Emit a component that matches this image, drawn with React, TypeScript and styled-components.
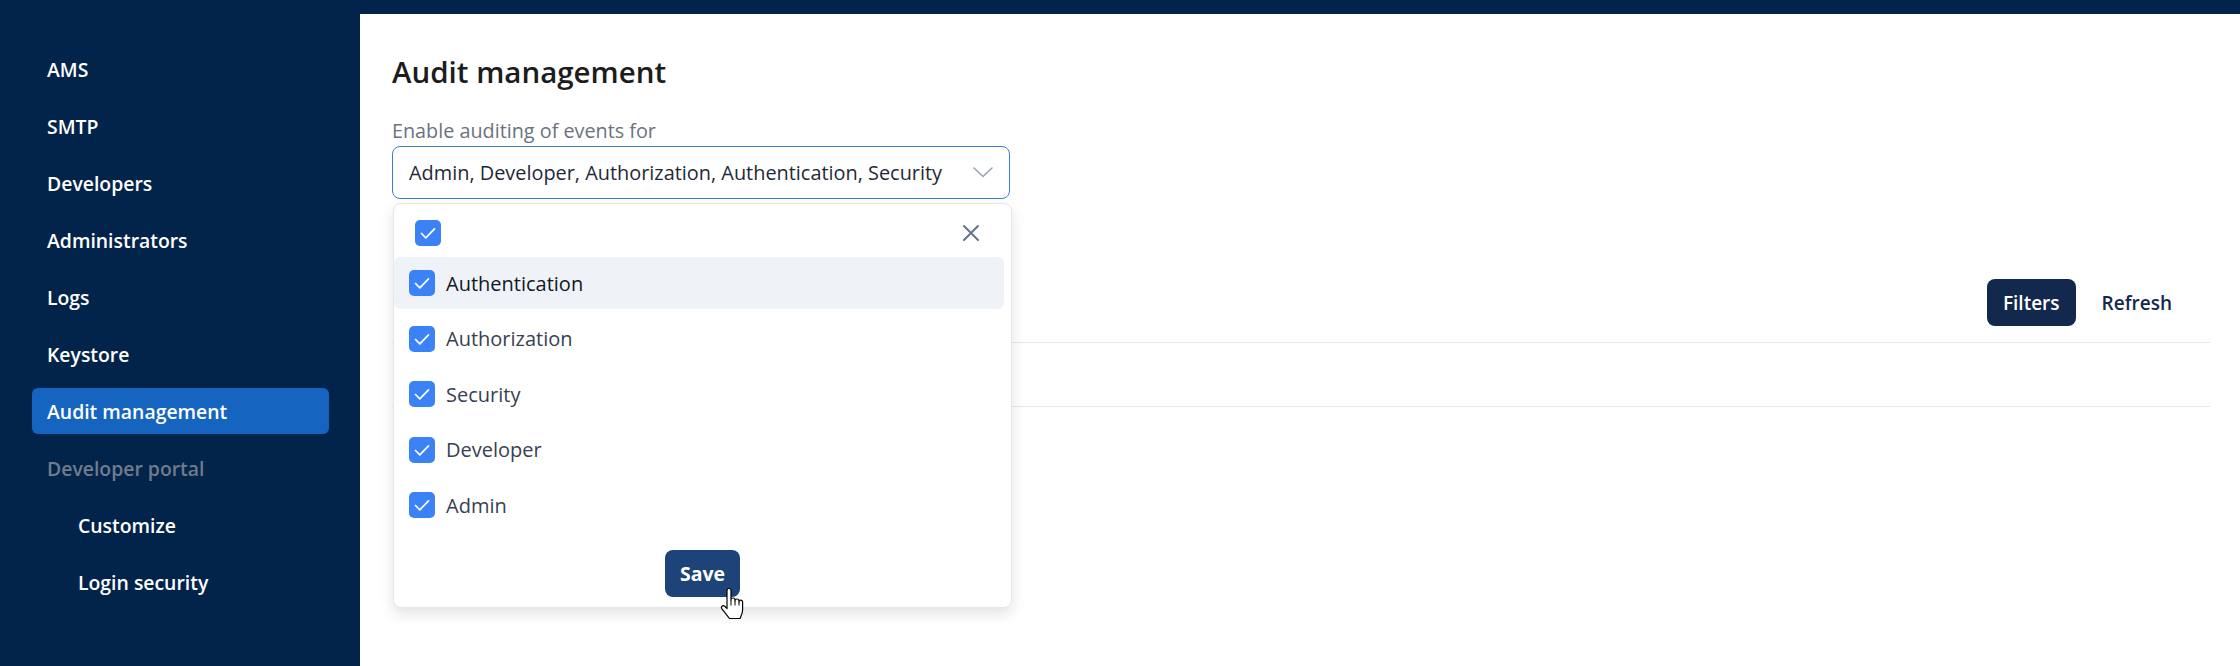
import React from 'react'
import styled, { createGlobalStyle } from 'styled-components'

const GlobalStyle = createGlobalStyle`
  body {
    margin: 0;
    background: #fff;
    font-family: 'Segoe UI', 'Open Sans', 'Noto Sans', sans-serif;
  }
`

const Shell = styled.div`
  display: flex;
  flex-direction: column;
  min-height: 100vh;
`

const TopBar = styled.div`
  height: 14px;
  background: #03244a;
`

const Body = styled.div`
  flex: 1;
  display: flex;
`

const Sidebar = styled.nav`
  width: 360px;
  flex-shrink: 0;
  background: #03244a;
  padding: 32px 31px 0 32px;
  box-sizing: border-box;
  display: flex;
  flex-direction: column;
  gap: 11px;
`

const NavItem = styled.div<{ $active?: boolean; $muted?: boolean; $sub?: boolean }>`
  height: 46px;
  display: flex;
  align-items: center;
  padding-left: ${(p) => (p.$sub ? '46px' : '15px')};
  border-radius: 6px;
  font-size: 19.4px;
  font-weight: 600;
  color: ${(p) => (p.$muted ? '#6f7c8c' : '#fff')};
  background: ${(p) => (p.$active ? '#1565c0' : 'transparent')};
`

const Main = styled.main`
  flex: 1;
  padding: 0 30px 0 32px;
`

const Title = styled.h1`
  margin: 39px 0 0;
  font-size: 29.5px;
  line-height: 37px;
  font-weight: 600;
  color: #1c1c1c;
`

const Field = styled.div`
  position: relative;
  width: 618px;
  margin-top: 29px;
`

const Label = styled.div`
  font-size: 19.8px;
  line-height: 24px;
  color: #6b7280;
`

const SelectBox = styled.div`
  margin-top: 3px;
  height: 53px;
  box-sizing: border-box;
  border: 1px solid #3b7ddd;
  border-radius: 8px;
  display: flex;
  align-items: center;
  justify-content: space-between;
  padding: 0 16px 0 16px;
  font-size: 19.9px;
  color: #1f2937;
`

const Dropdown = styled.div`
  position: absolute;
  top: calc(100% + 4px);
  left: 1px;
  right: -2px;
  background: #fff;
  border: 1px solid #e5e7eb;
  border-radius: 8px;
  box-shadow: 0 6px 14px rgba(15, 23, 42, 0.12);
  z-index: 5;
  padding-bottom: 10px;
`

const DropHead = styled.div`
  display: flex;
  align-items: center;
  justify-content: space-between;
  padding: 16px 28px 0 21px;
`

const CloseBtn = styled.div`
  width: 24px;
  height: 24px;
  display: flex;
  align-items: center;
  justify-content: center;
`

const OptionList = styled.div`
  margin: 11px 7px 0 0;
  display: flex;
  flex-direction: column;
  gap: 3.5px;
`

const Option = styled.div<{ $hover?: boolean }>`
  height: 52px;
  display: flex;
  align-items: center;
  gap: 11px;
  padding-left: 15px;
  border-radius: 6px;
  background: ${(p) => (p.$hover ? '#eff2f7' : 'transparent')};
  font-size: 20px;
  color: ${(p) => (p.$hover ? '#111827' : '#374151')};
`

const SaveRow = styled.div`
  display: flex;
  justify-content: center;
  margin-top: 19px;
`

const SaveButton = styled.div`
  position: relative;
  width: 75px;
  height: 47px;
  border-radius: 8px;
  background: #1d4379;
  color: #fff;
  font-size: 19.5px;
  font-weight: 700;
  display: flex;
  align-items: center;
  justify-content: center;
`

const Cursor = styled.svg`
  position: absolute;
  left: 54px;
  top: 37px;
`

const Toolbar = styled.div`
  margin-top: 80px;
  display: flex;
  justify-content: flex-end;
  align-items: center;
  gap: 10px;
  padding-right: 22px;
`

const ToolButton = styled.div<{ $primary?: boolean }>`
  height: 47px;
  display: flex;
  align-items: center;
  padding: 0 16px;
  border-radius: 8px;
  font-size: 19px;
  font-weight: 600;
  background: ${(p) => (p.$primary ? '#13284d' : 'transparent')};
  color: ${(p) => (p.$primary ? '#fff' : '#13284d')};
`

const TableHead = styled.div`
  margin-top: 16px;
  height: 63px;
  border-top: 1px solid #e2e8f0;
  border-bottom: 1px solid #e2e8f0;
`

const Box = styled.div`
  width: 26px;
  height: 26px;
  border-radius: 5px;
  background: #3b82f6;
  display: flex;
  align-items: center;
  justify-content: center;
  flex-shrink: 0;
`

const Check = () => (
  <Box>
    <svg width="26" height="26" viewBox="0 0 26 26">
      <polyline points="6.5,13.5 10.8,17.8 19.5,8.8" fill="none" stroke="#fff" strokeWidth="1.7" strokeLinecap="round" strokeLinejoin="round" />
    </svg>
  </Box>
)

const nav = [
  { label: 'AMS' },
  { label: 'SMTP' },
  { label: 'Developers' },
  { label: 'Administrators' },
  { label: 'Logs' },
  { label: 'Keystore' },
  { label: 'Audit management', active: true },
  { label: 'Developer portal', muted: true },
  { label: 'Customize', sub: true },
  { label: 'Login security', sub: true },
]

const options = ['Authentication', 'Authorization', 'Security', 'Developer', 'Admin']

export default function App() {
  return (
    <Shell>
      <GlobalStyle />
      <TopBar />
      <Body>
        <Sidebar>
          {nav.map((n) => (
            <NavItem key={n.label} $active={n.active} $muted={n.muted} $sub={n.sub}>
              {n.label}
            </NavItem>
          ))}
        </Sidebar>
        <Main>
          <Title>Audit management</Title>
          <Field>
            <Label>Enable auditing of events for</Label>
            <SelectBox>
              <span>Admin, Developer, Authorization, Authentication, Security</span>
              <svg width="20" height="11" viewBox="0 0 20 11">
                <polyline points="1,1 10,9.5 19,1" fill="none" stroke="#9aa3b2" strokeWidth="1.6" strokeLinecap="round" strokeLinejoin="round" />
              </svg>
            </SelectBox>
            <Dropdown>
              <DropHead>
                <Check />
                <CloseBtn>
                  <svg width="18" height="18" viewBox="0 0 18 18">
                    <path d="M2 2 L16 16 M16 2 L2 16" stroke="#64748b" strokeWidth="2" strokeLinecap="round" />
                  </svg>
                </CloseBtn>
              </DropHead>
              <OptionList>
                {options.map((o, i) => (
                  <Option key={o} $hover={i === 0}>
                    <Check />
                    {o}
                  </Option>
                ))}
              </OptionList>
              <SaveRow>
                <SaveButton>
                  Save
                  <Cursor width="26" height="33" viewBox="0 0 26 33">
                    <path
                      d="M8 3.5 a2 2 0 0 1 4 0 V13 a2 2 0 0 1 4 0 V14 a2 2 0 0 1 4 0 V15 a1.8 1.8 0 0 1 3.6 0 V23 c0 3.5 -1.5 6 -2.6 8.5 H10.5 c-2 -2.5 -5 -6.5 -7.6 -9.6 a1.9 1.9 0 0 1 2.8 -2.6 L8 21.5 Z"
                      fill="#fff"
                      stroke="#000"
                      strokeWidth="1.2"
                      strokeLinejoin="round"
                    />
                    <path d="M12 13 V18.5 M16 14 V18.5 M20 15 V18.5" stroke="#000" strokeWidth="1" />
                  </Cursor>
                </SaveButton>
              </SaveRow>
            </Dropdown>
          </Field>
          <Toolbar>
            <ToolButton $primary>Filters</ToolButton>
            <ToolButton>Refresh</ToolButton>
          </Toolbar>
          <TableHead />
        </Main>
      </Body>
    </Shell>
  )
}
